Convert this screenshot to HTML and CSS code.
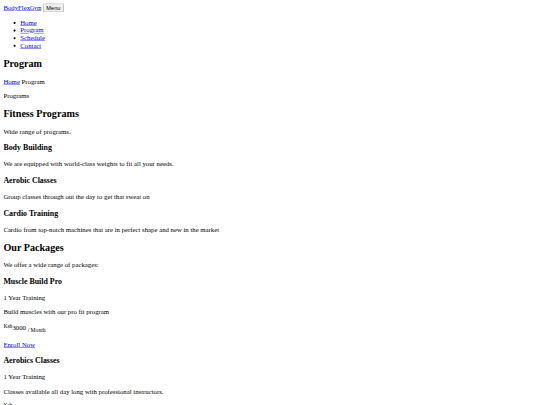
FILE: index.html
```html
<!DOCTYPE html>
<html class="page">
<head>
<meta charset="utf-8">
<title>Program</title>
<link rel="stylesheet" href="styles.css">
</head>
<body class="doc">
<header class="top">
<a href="#" class="brand">BodyFlex<small>Gym</small></a>
<button class="menu-btn">Menu</button>
<ul class="nav">
<li><a href="#">Home</a></li>
<li><a href="#">Program</a></li>
<li><a href="#">Schedule</a></li>
<li><a href="#">Contact</a></li>
</ul>
</header>
<section class="hero">
<h1 class="hero-title">Program</h1>
<p><a href="#">Home</a> Program</p>
</section>
<p>Programs</p>
<h2>Fitness Programs</h2>
<p>Wide range of programs.</p>
<h3>Body Building</h3>
<p>We are equipped with world-class weights to fit all your needs.</p>
<h3>Aerobic Classes</h3>
<p>Group classes through out the day to get that sweat on</p>
<h3>Cardio Training</h3>
<p>Cardio from top-notch machines that are in perfect shape and new in the market</p>
<h2>Our Packages</h2>
<p>We offer a wide range of packages:</p>
<h3>Muscle Build Pro</h3>
<p>1 Year Training</p>
<p>Build muscles with our pro fit program</p>
<p><sup>Ksh</sup>3000 <sub>/ Month</sub></p>
<p><a href="#">Enroll Now</a></p>
<h3>Aerobics Classes</h3>
<p>1 Year Training</p>
<p>Classes available all day long with professional instructors.</p>
<p><sup>Ksh</sup>2500 <sub>/ Month</sub></p>
<p><a href="#">Enroll Now</a></p>
</body>
</html>
```
FILE: styles.css
```css
.page {
  width: 1280px;
  transform: scale(0.421875);
  transform-origin: 0 0;
}
.doc {
  font-family: "Liberation Serif", "Times New Roman", serif;
}
.hero-title {
  font-size: 1.5em;
  margin: 0.83em 0;
}
```
